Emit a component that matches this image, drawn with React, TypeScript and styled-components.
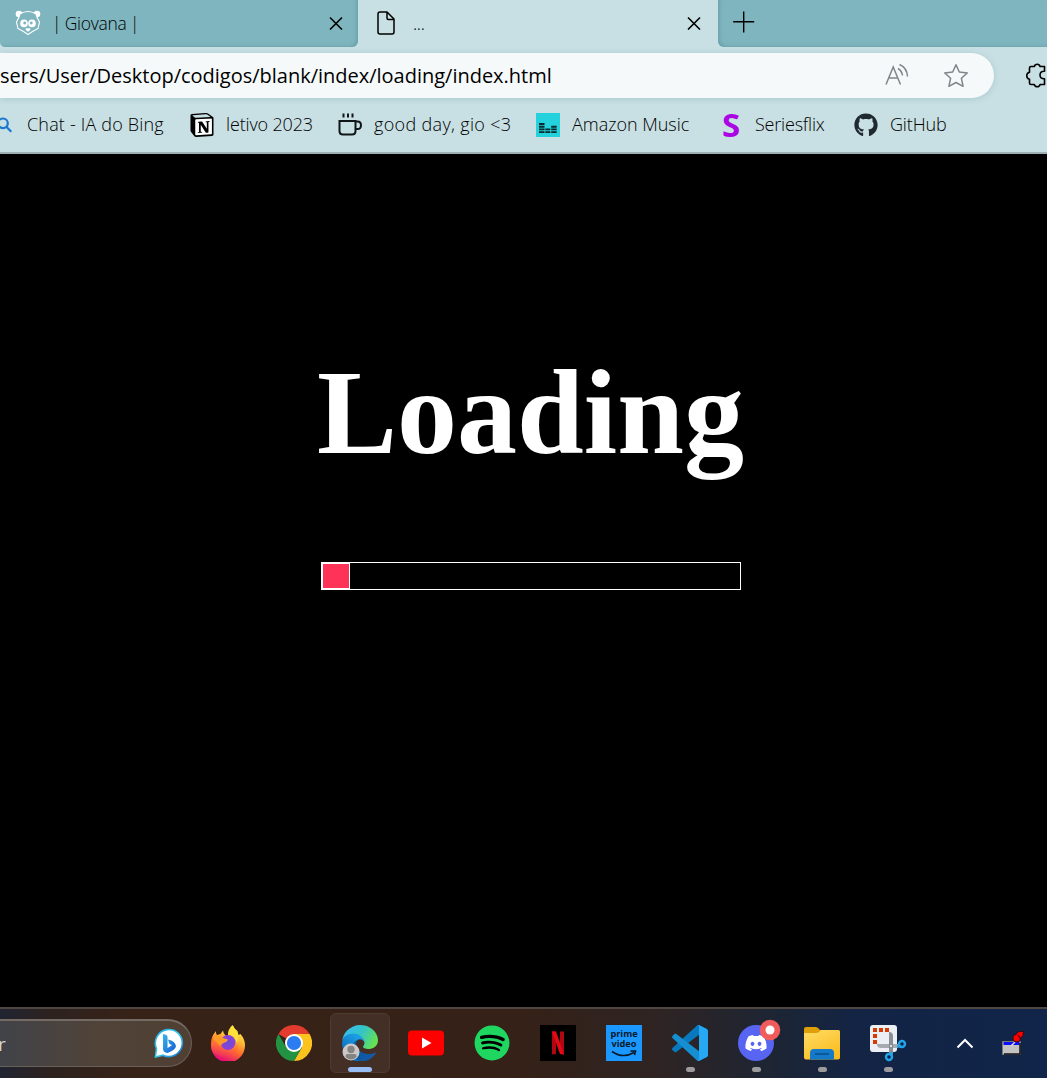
import React from "react";
import styled, { createGlobalStyle } from "styled-components";
import { FaDiscord, FaGithub, FaSpotify } from "react-icons/fa";
import { SiNotion } from "react-icons/si";

const ui = `"Open Sans", "Noto Sans", sans-serif`;

const Global = createGlobalStyle`
  * { box-sizing: border-box; }
  html, body { margin: 0; padding: 0; background: #000; overflow: hidden; }
  svg { display: block; flex: none; }
`;

const Screen = styled.div`
  display: flex;
  flex-direction: column;
  width: 1047px;
  height: 1078px;
  overflow: hidden;
  font-family: ${ui};
  color: #000;
`;

const TabStrip = styled.header`
  display: flex;
  height: 47px;
  flex: none;
  background: #c8dfe3;
`;

const Tab = styled.div<{ $active?: boolean; $width: number }>`
  display: flex;
  align-items: center;
  width: ${(p) => p.$width}px;
  height: 47px;
  flex: none;
  padding: 0 ${(p) => (p.$active ? 17 : 15)}px 1px ${(p) => (p.$active ? 18 : 15)}px;
  border-radius: ${(p) => (p.$active ? "7px 7px 0 0" : "0 0 6px 5px")};
  background: ${(p) => (p.$active ? "#c8dfe3" : "#7eb5be")};
  box-shadow: ${(p) => (p.$active ? "none" : "inset -3px -2px 4px -2px #659da6")};
`;

const TabTitle = styled.span<{ $inset: number }>`
  flex: 1;
  padding: 0 0 1px ${(p) => p.$inset}px;
  font-size: 17.5px;
  font-weight: 300;
  line-height: 24px;
  letter-spacing: -0.3px;
  word-spacing: -0.7px;
  white-space: nowrap;
`;

const StripRest = styled.div`
  flex: 1;
  display: flex;
  align-items: center;
  padding: 0 0 3px 15px;
  border-radius: 0 0 0 6px;
  background: #7eb5be;
  box-shadow: inset 3px -2px 4px -2px #659da6;
`;

const Toolbar = styled.div`
  display: flex;
  align-items: center;
  height: 57px;
  flex: none;
  background: #c8dfe3;
`;

const Address = styled.div`
  display: flex;
  align-items: center;
  width: 994px;
  height: 45px;
  margin-right: 31px;
  padding-right: 25px;
  flex: none;
  border-radius: 0 23px 23px 0;
  background: #f5f9fa;
  box-shadow: 0 1px 6px #a9c9cf;
`;

const Url = styled.span`
  flex: 1;
  font-size: 20px;
  font-weight: 400;
  line-height: 28px;
  letter-spacing: -0.01px;
  white-space: pre;
`;

const AddressTools = styled.div`
  display: flex;
  align-items: center;
  gap: 34px;
`;

const Bookmarks = styled.nav`
  display: flex;
  height: 50px;
  flex: none;
  padding-bottom: 6px;
  background: #c8dfe3;
  border-bottom: 2px solid #9fb0b5;
`;

const Bookmark = styled.div<{ $width: number }>`
  display: flex;
  align-items: center;
  gap: 12px;
  width: ${(p) => p.$width}px;
  flex: none;
`;

const BookmarkLabel = styled.span<{ $spacing: number }>`
  padding-bottom: 2px;
  font-size: 18px;
  font-weight: 300;
  line-height: 24px;
  letter-spacing: ${(p) => p.$spacing}px;
  white-space: pre;
`;

const SeriesMark = styled.span`
  width: 24px;
  padding-bottom: 1px;
  text-align: center;
  color: #ab05e3;
  font-size: 33px;
  font-weight: 700;
  line-height: 32px;
`;

const Page = styled.main`
  display: flex;
  flex-direction: column;
  align-items: center;
  height: 853px;
  flex: none;
  padding: 190px 0 0 14px;
  background: #000;
`;

const Heading = styled.h1`
  margin: 0;
  color: #fff;
  font: bold 120px/138px "Liberation Serif", serif;
`;

const Progress = styled.div`
  width: 420px;
  height: 28px;
  margin-top: 80px;
  border: 1px solid #fff;
`;

const ProgressFill = styled.div`
  height: 100%;
  border: 1px solid #fff;
  background: #ff3358;
`;

const Taskbar = styled.footer`
  display: flex;
  height: 71px;
  flex: none;
  border-top: 2px solid #504641;
  background: linear-gradient(90deg, #202431 0, #2d221f 50px, #372217 130px, #352117 520px, #2e2423 660px, #1c2535 780px, #132445 860px, #102549 1047px);
`;

const Search = styled.div`
  display: flex;
  align-items: center;
  justify-content: space-between;
  width: 192px;
  height: 48px;
  margin: 10px 6px 0 0;
  padding-right: 7px;
  flex: none;
  border: 1px solid #69605a;
  border-top: 2px solid #756b65;
  border-left: 0;
  border-radius: 0 24px 24px 0;
  background: linear-gradient(90deg, #414349, #504338 100px, #503f33);
`;

const SearchText = styled.span`
  color: #d3d2d2;
  font-size: 19px;
  margin-left: -2px;
`;

const Apps = styled.div`
  display: flex;
  gap: 6px;
  padding-top: 4px;
`;

const AppButton = styled.div<{ $active?: boolean }>`
  display: flex;
  flex-direction: column;
  align-items: center;
  width: 60px;
  height: 60px;
  padding-top: ${(p) => (p.$active ? 11 : 12)}px;
  border-radius: 6px;
  border: ${(p) => (p.$active ? "1px solid #4d3b31" : "0")};
  background: ${(p) => (p.$active ? "#432f25" : "transparent")};
`;

const Indicator = styled.div<{ $active?: boolean }>`
  width: ${(p) => (p.$active ? 24 : 9)}px;
  height: 5px;
  margin-top: 6px;
  flex: none;
  border-radius: 3px;
  background: ${(p) => (p.$active ? "#99bdf5" : "#9d9b9d")};
`;

const Tray = styled.div`
  display: flex;
  align-items: center;
  gap: 27px;
  padding: 0 0 0 38px;
`;

const PrimeTile = styled.div`
  display: flex;
  flex-direction: column;
  align-items: center;
  width: 36px;
  height: 36px;
  padding-top: 4px;
  flex: none;
  background: #1b98ff;
  color: #07192b;
`;

const PrimeWord = styled.span`
  height: 10px;
  font-size: 9.2px;
  font-weight: 700;
  line-height: 10px;
`;

const NotionBadge = styled.div`
  display: flex;
  width: 24px;
  height: 24px;
  background: linear-gradient(#fff, #fff) 5px 6px / 17px 16px no-repeat;
`;

const SpotifyBadge = styled.div`
  width: 36px;
  height: 36px;
  color: #1fd760;
  background: radial-gradient(circle, #000 0 15px, transparent 16px);
`;

const Close = () => (
  <svg width="14" height="14" viewBox="0 0 14 14" stroke="#000" strokeWidth="1.6">
    <path d="M1 1.500l12 12M13 1.500L1 13.500" />
  </svg>
);

const Panda = () => (
  <svg width="26" height="26" viewBox="0 0 26 26" fill="#fff">
    <circle cx="4" cy="4" r="3.300" />
    <circle cx="22" cy="4" r="3.300" />
    <path d="M5 4Q13-1 21 4Q22 8 24.500 12L23 18.500Q18 21 13 24.500Q8 21 3 18.500L1.500 12Q4 8 5 4Z" fill="#7eb5be" stroke="#fff" strokeWidth="1.100" />
    <circle cx="9" cy="13.400" r="3.800" />
    <circle cx="17" cy="13.400" r="3.800" />
    <circle cx="9.700" cy="13" r="1.400" fill="#7eb5be" />
    <circle cx="16.300" cy="13" r="1.400" fill="#7eb5be" />
    <path d="M10.700 18.300h4.600v1.700l-2.300 1.700-2.300-1.700z" />
  </svg>
);

const FileIcon = () => (
  <svg width="20" height="26" viewBox="0 0 20 26" fill="none" stroke="#000" strokeWidth="1.500">
    <path d="M4 2h7l7 7v13q0 2-2 2H4q-2 0-2-2V4q0-2 2-2zM11 2v6q0 1.500 1.500 1.500h5.500" strokeLinejoin="round" />
  </svg>
);

const Plus = () => (
  <svg width="22" height="22" viewBox="0 0 22 22" stroke="#000" strokeWidth="1.400">
    <path d="M10.700 .5v21M.2 10.700h21" />
  </svg>
);

const ReadAloud = () => (
  <svg width="24" height="24" viewBox="0 0 24 24" fill="none" stroke="#808587" strokeWidth="1.500">
    <path d="M1 20.500L8.200 3 15.500 20.500M4 14h9M13 4.500q4 2.500 4.500 7M14.500 .5q7.500 3 8 12" />
  </svg>
);

const Star = () => (
  <svg width="26" height="26" viewBox="0 0 26 26" fill="none" stroke="#808587" strokeWidth="1.500" strokeLinejoin="round">
    <path d="M13 1.700l3.300 7.300 8 1-5.900 5.300 1.700 8L13 19.500l-7.100 3.800 1.700-8L1.700 10l8-1z" />
  </svg>
);

const Puzzle = () => (
  <svg width="26" height="26" viewBox="0 0 26 26" fill="none" stroke="#000" strokeWidth="1.600" strokeLinejoin="round">
    <path d="M6 3.500h3.300a3 3 0 0 1 5.800 0H19.500v4.800q-4.500-.3-4.500 3.700t4.500 3.800v5.700h-4.400a3 3 0 0 1-5.800 0H6q-1.500 0-1.500-1.500v-3.700a3.600 3.600 0 0 1 0-7V5q0-1.500 1.500-1.500z" />
  </svg>
);

const Magnifier = () => (
  <svg width="15" height="20" viewBox="0 0 15 20" fill="none" stroke="#1b78cf" strokeWidth="2.200">
    <circle cx="3" cy="8.300" r="4.800" />
    <path d="M6.300 11.800l5 5" />
  </svg>
);

const Coffee = () => (
  <svg width="24" height="24" viewBox="0 0 24 24" fill="none" stroke="#101617" strokeWidth="2">
    <path d="M1.500 8h16v10q0 3.500-3.500 3.500H5q-3.500 0-3.500-3.500zM17.500 8.500h2q3.500 0 3.500 3.800T19.500 16h-2M5.500 .5v4M10 .5v4M14.500 .5v4" />
  </svg>
);

const AmazonMusic = () => (
  <svg width="24" height="24" viewBox="0 0 24 24">
    <path fill="#25d1dc" d="M0 0h24v24H0z" />
    <path d="M3 11h5.500M3 13.700h5.500M3 16.400h5.500M3 19.100h5.500M9.300 16.400h5M9.300 19.100h5M15.200 13.700h5.500M15.200 16.400h5.500M15.200 19.100h5.500" stroke="#0b2b2f" strokeWidth="1.900" />
  </svg>
);

const Bing = () => (
  <svg width="30" height="31" viewBox="0 0 30 31">
    <defs>
      <linearGradient id="bingRim" x2="1" y2="1"><stop stopColor="#20a9e5" /><stop offset=".5" stopColor="#32cdee" /><stop offset="1" stopColor="#126bd0" /></linearGradient>
      <linearGradient id="bingB" x2="1" y2="1"><stop stopColor="#38b5e9" /><stop offset="1" stopColor="#175bd5" /></linearGradient>
    </defs>
    <path d="M1.500 29L2.500 20.500A13.500 13.500 0 1 1 9 27.200Z" fill="#fff" stroke="url(#bingRim)" strokeWidth="1.600" />
    <path d="M9 6q4.500 .5 4.500 3v11l4.500-2.700-2.700-1.500-1.300-4.300q7.500 1.500 8 7-1 3.500-8.500 6.500-4.500-.5-4.500-4z" fill="url(#bingB)" />
  </svg>
);

const Firefox = () => (
  <svg width="36" height="36" viewBox="0 0 36 36">
    <defs>
      <linearGradient id="foxBody" x1=".8" y1="0" x2=".4" y2="1"><stop stopColor="#fff44f" /><stop offset=".35" stopColor="#ffc136" /><stop offset=".65" stopColor="#ff6b2c" /><stop offset="1" stopColor="#e3067d" /></linearGradient>
      <radialGradient id="foxGlobe"><stop stopColor="#674dd6" /><stop offset="1" stopColor="#9040d8" /></radialGradient>
      <linearGradient id="foxLower" x1=".8" y1="0" x2=".3" y2="1"><stop stopColor="#ffad2e" /><stop offset=".5" stopColor="#ff6b35" /><stop offset="1" stopColor="#ee2864" /></linearGradient>
    </defs>
    <path d="M6 6q-.3 3 1 4l3.500-1 2.500-3.500q.3 3 2.500 5l2.500 .5q-.5-6.500 4.500-11 .7 3 5 6l1 4 2-1q5 6 4.500 12A17 17 0 0 1 1 20q-.5-8 5-14z" fill="url(#foxBody)" />
    <path d="M1 19q2-5 9-5 0 10 8 10 7 0 9-7 3 9-4 13-10 3-18-1-4-3-4-10z" fill="url(#foxLower)" />
    <path d="M18 10q8 0 8 8 3-3 2-9-3-3-4.500-8-5.500 4-5.500 9z" fill="#ffe13b" />
    <circle cx="18" cy="17.500" r="7.500" fill="url(#foxGlobe)" />
    <path d="M3 14q2-4 8-2.500 2 2 7 3l-1 2-3.500 1.500q-2 1-3 3-3-3-7.500-7z" fill="#ff9a28" />
  </svg>
);

const Chrome = () => (
  <svg width="36" height="36" viewBox="0 0 36 36">
    <path d="M18 18L2.400 9A18 18 0 0 1 33.600 9z" fill="#e33b2e" />
    <path d="M18 9h15.600A18 18 0 0 1 18 36l7.800-13.500z" fill="#fcc31e" />
    <path d="M10.200 22.500L2.400 9A18 18 0 0 0 18 36l7.800-13.500z" fill="#229342" />
    <circle cx="18" cy="18" r="9" fill="#fff" />
    <circle cx="18" cy="18" r="7.100" fill="#2b7cf0" />
  </svg>
);

const Edge = () => (
  <svg width="36" height="36" viewBox="0 0 36 36">
    <defs>
      <linearGradient id="edgeDark" x1=".2" y1=".5" x2="1" y2=".5"><stop stopColor="#0c59a4" /><stop offset="1" stopColor="#1459a5" /></linearGradient>
      <linearGradient id="edgeMid" x1=".7" y1=".2" x2=".2" y2="1"><stop stopColor="#1b9de2" /><stop offset=".4" stopColor="#1383d1" /><stop offset="1" stopColor="#085ba6" /></linearGradient>
      <linearGradient id="edgeWave" y1=".2" x2="1" y2=".6"><stop stopColor="#35bdf2" /><stop offset=".5" stopColor="#35c3c8" /><stop offset="1" stopColor="#66e44d" /></linearGradient>
    </defs>
    <g transform="scale(.1406)">
      <path fill="url(#edgeDark)" d="M235.7 195.5a93.7 93.7 0 0 1-10.6 4.7 101.9 101.9 0 0 1-35.9 6.4c-47.3 0-88.5-32.5-88.5-74.3a31.5 31.5 0 0 1 16.4-27.3c-42.8 1.8-53.8 46.4-53.8 72.5 0 74 68.1 81.4 82.8 81.4 7.9 0 19.8-2.3 27-4.6l1.3-.4a128.3 128.3 0 0 0 66.6-52.8 4 4 0 0 0-5.3-5.6z" />
      <path fill="url(#edgeMid)" d="M105.7 246.6A79.2 79.2 0 0 1 83 225.3a80.7 80.7 0 0 1 29.5-120.3c3.2-1.5 8.5-4.2 15.6-4.1a32.4 32.4 0 0 1 25.7 13 31.9 31.9 0 0 1 6.3 18.7c0-.2 24.5-79.6-80-79.6-43.9 0-80 41.7-80 78.2a130.2 130.2 0 0 0 12.1 56 128 128 0 0 0 156.4 67 75.5 75.5 0 0 1-62.8-8z" />
      <path fill="url(#edgeWave)" d="M152.3 148.9c-.8 1-3.3 2.5-3.3 5.7 0 2.6 1.7 5.1 4.7 7.2 14.4 10 41.5 8.7 41.6 8.7a59.6 59.6 0 0 0 30.3-8.3 61.4 61.4 0 0 0 30.4-52.9c.3-22.4-8-37.3-11.3-43.9C223.5 23.9 177.7.4 128 .4A128 128 0 0 0 0 126.5c.5-36.5 36.8-66 80-66 3.5 0 23.5.3 42 10.1a72.6 72.6 0 0 1 30.9 29.3c6.1 10.6 7.2 24.1 7.2 29.5s-2.7 13.3-7.9 19.8z" />
    </g>
    <circle cx="9" cy="27" r="8.500" fill="#cbc9c8" />
    <circle cx="9" cy="24.500" r="3.700" fill="#868482" />
    <path d="M3.500 32v-1q0-2 2-2h7q2 0 2 2v1q-5.500 5-11 0z" fill="#868482" />
  </svg>
);

const YouTube = () => (
  <svg width="36" height="36" viewBox="0 0 36 36">
    <rect y="5.500" width="36" height="25" rx="4" fill="#fe0000" />
    <path d="M14 12.500l9.500 5.500-9.500 5.500z" fill="#fff" />
  </svg>
);

const Netflix = () => (
  <svg width="36" height="36" viewBox="0 0 36 36">
    <path d="M0 0h36v36H0z" />
    <path d="M12 6.500h4V29l-4 .6zM20 6.500h4v23.100l-4-.6z" fill="#b20710" />
    <path d="M12 6.500h4l8 23.100-4-.6z" fill="#e50914" />
  </svg>
);

const VSCode = () => (
  <svg width="36" height="36" viewBox="0 0 100 100">
    <path fill="#0879bd" d="M96.460 10.800L75.860.880C73.470-.270 70.620.210 68.750 2.080L1.300 63.580C-.520 65.240-.510 68.090 1.300 69.750L6.810 74.750C8.300 76.100 10.530 76.200 12.130 74.990L93.360 13.370C96.090 11.300 100 13.250 100 16.670z" />
    <path fill="#158fd2" d="M96.460 89.200L75.860 99.120C73.470 100.270 70.620 99.790 68.750 97.920L1.300 36.420C-.520 34.760-.510 31.910 1.300 30.250L6.810 25.250C8.300 23.900 10.530 23.800 12.130 25.010L93.360 86.630C96.090 88.700 100 86.750 100 83.330z" />
    <path fill="#27a8f2" d="M75.860 99.130C73.470 100.270 70.620 99.790 68.750 97.920C71.060 100.220 75 98.590 75 95.330V4.670C75 1.410 71.060-.220 68.750 2.080C70.620.210 73.470-.270 75.860.870L96.460 10.780C98.620 11.820 100 14.010 100 16.410V83.590C100 85.990 98.620 88.180 96.460 89.220z" />
  </svg>
);

const Discord = () => (
  <svg width="36" height="36" viewBox="0 0 36 36" overflow="visible">
    <circle cx="18" cy="18" r="18" fill="#5865f2" />
    <FaDiscord x="6.500" y="6.500" size={23} color="#fff" />
    <circle cx="32" cy="5" r="10.300" fill="#f05b5c" />
    <circle cx="32" cy="5" r="4.500" fill="#fff" />
  </svg>
);

const Explorer = () => (
  <svg width="36" height="36" viewBox="0 0 36 36">
    <defs><linearGradient id="folderFront" x2=".6" y2="1"><stop stopColor="#ffdc68" /><stop offset="1" stopColor="#fabd20" /></linearGradient></defs>
    <path d="M0 4q0-2 2-2h9q2 0 3 1l2 2h18q2 0 2 2v12H0z" fill="#df9f09" />
    <path d="M0 8h12q2 0 3-1l2-2h17q2 0 2 2v25.500q0 2-2 2H2q-2 0-2-2z" fill="url(#folderFront)" />
    <path d="M6 34.500v-6.500q0-4 4-4h16q4 0 4 4v6.500z" fill="#1479c8" />
    <path d="M11 29h14" stroke="#084f88" strokeWidth="1.500" />
  </svg>
);

const Snipping = () => (
  <svg width="36" height="36" viewBox="0 0 36 36" overflow="visible">
    <rect width="27" height="27" rx="3" fill="#eceff3" />
    <path d="M3 3h4v4H3zM9 3h4v4H9zM15 3h4v4h-4zM3 9h4v4H3zM3 15h4v4H3z" fill="#d83b01" />
    <path d="M19 7q4 0 4 4v18h-4z" fill="#8a9097" />
    <path d="M7 19h21v4H11q-4 0-4-4z" fill="#a5abb1" />
    <path d="M19 19h4v4h-4z" fill="#7e858c" />
    <circle cx="21" cy="21" r="1.200" fill="#e2e4e6" />
    <circle cx="32" cy="19" r="3" fill="none" stroke="#20a5e8" strokeWidth="2.400" />
    <circle cx="19" cy="32" r="3" fill="none" stroke="#20a5e8" strokeWidth="2.400" />
    <path d="M27 21.500h4M21.500 27v4" stroke="#20a5e8" strokeWidth="2.400" />
  </svg>
);

const Chevron = () => (
  <svg width="18" height="12" viewBox="0 0 18 12" fill="none" stroke="#fff" strokeWidth="2">
    <path d="M1.500 9.500L9 2l7.500 7.500" />
  </svg>
);

const PinnedWindow = () => (
  <svg width="24" height="26" viewBox="0 0 24 26">
    <path d="M1.500 10.500h18v13H1.500z" fill="#c3c3c3" stroke="#777" />
    <path d="M2.500 11h16v3h-16z" fill="#0b0bff" />
    <path d="M3 23h16V12" fill="none" stroke="#111" strokeWidth="1.500" />
    <path d="M10 15l4-4" stroke="#ddd" strokeWidth="1.500" />
    <path d="M12 6q0-2 3-2.500 1-3 4-3h3.500l-.5 4-2.500 2.500q0 4-3.500 4-4 0-4-3z" fill="#f00" stroke="#330b14" />
    <path d="M16.500 3.500l3 4" stroke="#520006" strokeWidth="1.200" />
  </svg>
);

const Prime = () => (
  <PrimeTile>
    <PrimeWord>prime</PrimeWord>
    <PrimeWord>video</PrimeWord>
    <svg width="28" height="10" viewBox="0 0 28 10" fill="none" stroke="#07192b" strokeWidth="1.600">
      <path d="M2 2.500q11 7.500 22 1M20.500 2h5l-1 4" />
    </svg>
  </PrimeTile>
);

const bookmarks = [
  { label: "Chat - IA do Bing", icon: <Magnifier />, width: 190, spacing: 0.18 },
  { label: "letivo 2023", icon: <NotionBadge><SiNotion size={24} /></NotionBadge>, width: 148, spacing: -0.15 },
  { label: "good day, gio <3", icon: <Coffee />, width: 198, spacing: 0.33 },
  { label: "Amazon Music", icon: <AmazonMusic />, width: 183, spacing: -0.03 },
  { label: "Seriesflix", icon: <SeriesMark>S</SeriesMark>, width: 135, spacing: -0.2 },
  { label: "GitHub", icon: <FaGithub size={24} color="#20292f" />, width: 120, spacing: -0.15 },
];

const apps = [
  { name: "firefox", icon: <Firefox /> },
  { name: "chrome", icon: <Chrome /> },
  { name: "edge", icon: <Edge />, active: true, open: true },
  { name: "youtube", icon: <YouTube /> },
  { name: "spotify", icon: <SpotifyBadge><FaSpotify size={36} /></SpotifyBadge> },
  { name: "netflix", icon: <Netflix /> },
  { name: "prime", icon: <Prime /> },
  { name: "code", icon: <VSCode />, open: true },
  { name: "discord", icon: <Discord />, open: true },
  { name: "explorer", icon: <Explorer />, open: true },
  { name: "snipping", icon: <Snipping />, open: true },
];

const progress = 28 / 418;

export default function App() {
  return (
    <Screen>
      <Global />
      <TabStrip>
        <Tab $width={358}>
          <Panda />
          <TabTitle $inset={11}>| Giovana |</TabTitle>
          <Close />
        </Tab>
        <Tab $width={360} $active>
          <FileIcon />
          <TabTitle $inset={17}>...</TabTitle>
          <Close />
        </Tab>
        <StripRest><Plus /></StripRest>
      </TabStrip>
      <Toolbar>
        <Address>
          <Url>sers/User/Desktop/codigos/blank/index/loading/index.html</Url>
          <AddressTools><ReadAloud /><Star /></AddressTools>
        </Address>
        <Puzzle />
      </Toolbar>
      <Bookmarks>
        {bookmarks.map((b) => (
          <Bookmark key={b.label} $width={b.width}>
            {b.icon}
            <BookmarkLabel $spacing={b.spacing}>{b.label}</BookmarkLabel>
          </Bookmark>
        ))}
      </Bookmarks>
      <Page>
        <Heading>Loading</Heading>
        <Progress><ProgressFill style={{ width: `${progress * 100}%` }} /></Progress>
      </Page>
      <Taskbar>
        <Search><SearchText>r</SearchText><Bing /></Search>
        <Apps>
          {apps.map((a) => (
            <AppButton key={a.name} $active={a.active}>
              {a.icon}
              {a.open && <Indicator $active={a.active} />}
            </AppButton>
          ))}
        </Apps>
        <Tray><Chevron /><PinnedWindow /></Tray>
      </Taskbar>
    </Screen>
  );
}
